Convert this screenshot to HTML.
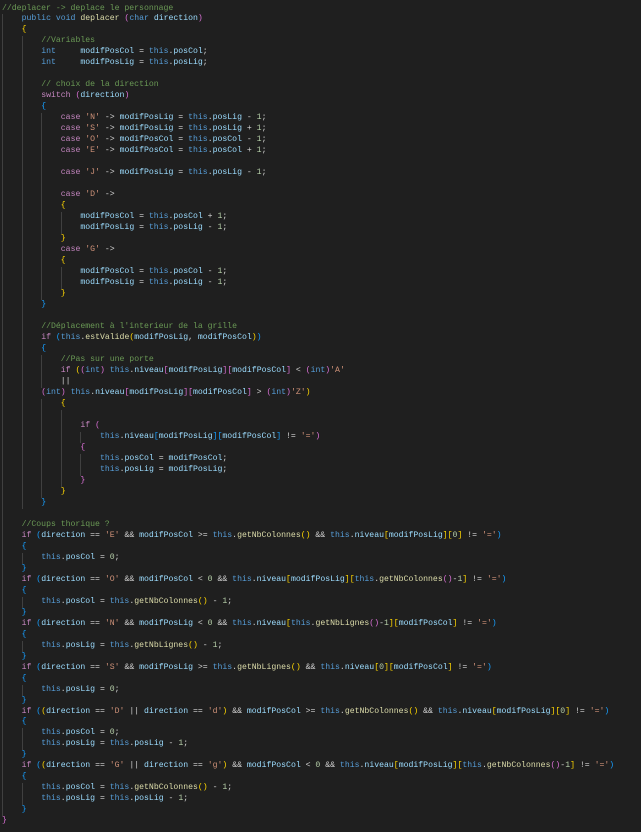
<!DOCTYPE html>
<html><head><meta charset="utf-8"><style>
html,body{margin:0;padding:0;background:#1f1f1f;width:641px;height:832px;overflow:hidden}
#c{position:absolute;left:2px;top:3.5px;font-family:"Liberation Mono",monospace;font-size:8.17px;line-height:10.99px;color:#d4d4d4}
#c div{height:10.99px;white-space:pre}
i{display:inline-block;width:19.6px;height:10.99px;vertical-align:top;box-sizing:border-box;border-left:1px solid #404040;font-style:normal}
.k{color:#569cd6}.c{color:#c586c0}.f{color:#dcdcaa}.v{color:#9cdcfe}.s{color:#ce9178}.n{color:#b5cea8}.m{color:#6a9955}
.y{color:#ffd700}.p{color:#da70d6}.b{color:#179fff}
</style></head><body><div id="c">
<div><span class="m">//deplacer -&gt; deplace le personnage</span></div>
<div><i></i><span class="k">public void</span> <span class="f">deplacer</span> <span class="p">(</span><span class="k">char</span> <span class="v">direction</span><span class="p">)</span></div>
<div><i></i><span class="y">{</span></div>
<div><i></i><i></i><span class="m">//Variables</span></div>
<div><i></i><i></i><span class="k">int</span>     <span class="v">modifPosCol</span> = <span class="k">this</span>.<span class="v">posCol</span>;</div>
<div><i></i><i></i><span class="k">int</span>     <span class="v">modifPosLig</span> = <span class="k">this</span>.<span class="v">posLig</span>;</div>
<div><i></i><i></i></div>
<div><i></i><i></i><span class="m">// choix de la direction</span></div>
<div><i></i><i></i><span class="c">switch</span> <span class="p">(</span><span class="v">direction</span><span class="p">)</span></div>
<div><i></i><i></i><span class="b">{</span></div>
<div><i></i><i></i><i></i><span class="c">case</span> <span class="s">'N'</span> -&gt; <span class="v">modifPosLig</span> = <span class="k">this</span>.<span class="v">posLig</span> - <span class="n">1</span>;</div>
<div><i></i><i></i><i></i><span class="c">case</span> <span class="s">'S'</span> -&gt; <span class="v">modifPosLig</span> = <span class="k">this</span>.<span class="v">posLig</span> + <span class="n">1</span>;</div>
<div><i></i><i></i><i></i><span class="c">case</span> <span class="s">'O'</span> -&gt; <span class="v">modifPosCol</span> = <span class="k">this</span>.<span class="v">posCol</span> - <span class="n">1</span>;</div>
<div><i></i><i></i><i></i><span class="c">case</span> <span class="s">'E'</span> -&gt; <span class="v">modifPosCol</span> = <span class="k">this</span>.<span class="v">posCol</span> + <span class="n">1</span>;</div>
<div><i></i><i></i><i></i></div>
<div><i></i><i></i><i></i><span class="c">case</span> <span class="s">'J'</span> -&gt; <span class="v">modifPosLig</span> = <span class="k">this</span>.<span class="v">posLig</span> - <span class="n">1</span>;</div>
<div><i></i><i></i><i></i></div>
<div><i></i><i></i><i></i><span class="c">case</span> <span class="s">'D'</span> -&gt;</div>
<div><i></i><i></i><i></i><span class="y">{</span></div>
<div><i></i><i></i><i></i><i></i><span class="v">modifPosCol</span> = <span class="k">this</span>.<span class="v">posCol</span> + <span class="n">1</span>;</div>
<div><i></i><i></i><i></i><i></i><span class="v">modifPosLig</span> = <span class="k">this</span>.<span class="v">posLig</span> - <span class="n">1</span>;</div>
<div><i></i><i></i><i></i><span class="y">}</span></div>
<div><i></i><i></i><i></i><span class="c">case</span> <span class="s">'G'</span> -&gt;</div>
<div><i></i><i></i><i></i><span class="y">{</span></div>
<div><i></i><i></i><i></i><i></i><span class="v">modifPosCol</span> = <span class="k">this</span>.<span class="v">posCol</span> - <span class="n">1</span>;</div>
<div><i></i><i></i><i></i><i></i><span class="v">modifPosLig</span> = <span class="k">this</span>.<span class="v">posLig</span> - <span class="n">1</span>;</div>
<div><i></i><i></i><i></i><span class="y">}</span></div>
<div><i></i><i></i><span class="b">}</span></div>
<div><i></i><i></i></div>
<div><i></i><i></i><span class="m">//Déplacement à l'interieur de la grille</span></div>
<div><i></i><i></i><span class="c">if</span> <span class="b">(</span><span class="k">this</span>.<span class="f">estValide</span><span class="y">(</span><span class="v">modifPosLig</span>, <span class="v">modifPosCol</span><span class="y">)</span><span class="b">)</span></div>
<div><i></i><i></i><span class="b">{</span></div>
<div><i></i><i></i><i></i><span class="m">//Pas sur une porte</span></div>
<div><i></i><i></i><i></i><span class="c">if</span> <span class="y">(</span><span class="p">(</span><span class="k">int</span><span class="p">)</span> <span class="k">this</span>.<span class="v">niveau</span><span class="p">[</span><span class="v">modifPosLig</span><span class="p">][</span><span class="v">modifPosCol</span><span class="p">]</span> &lt; <span class="p">(</span><span class="k">int</span><span class="p">)</span><span class="s">'A'</span></div>
<div><i></i><i></i><i></i>||</div>
<div><i></i><i></i><span class="p">(</span><span class="k">int</span><span class="p">)</span> <span class="k">this</span>.<span class="v">niveau</span><span class="p">[</span><span class="v">modifPosLig</span><span class="p">][</span><span class="v">modifPosCol</span><span class="p">]</span> &gt; <span class="p">(</span><span class="k">int</span><span class="p">)</span><span class="s">'Z'</span><span class="y">)</span></div>
<div><i></i><i></i><i></i><span class="y">{</span></div>
<div><i></i><i></i><i></i><i></i></div>
<div><i></i><i></i><i></i><i></i><span class="c">if</span> <span class="p">(</span></div>
<div><i></i><i></i><i></i><i></i><i></i><span class="k">this</span>.<span class="v">niveau</span><span class="b">[</span><span class="v">modifPosLig</span><span class="b">][</span><span class="v">modifPosCol</span><span class="b">]</span> != <span class="s">'='</span><span class="p">)</span></div>
<div><i></i><i></i><i></i><i></i><span class="p">{</span></div>
<div><i></i><i></i><i></i><i></i><i></i><span class="k">this</span>.<span class="v">posCol</span> = <span class="v">modifPosCol</span>;</div>
<div><i></i><i></i><i></i><i></i><i></i><span class="k">this</span>.<span class="v">posLig</span> = <span class="v">modifPosLig</span>;</div>
<div><i></i><i></i><i></i><i></i><span class="p">}</span></div>
<div><i></i><i></i><i></i><span class="y">}</span></div>
<div><i></i><i></i><span class="b">}</span></div>
<div><i></i></div>
<div><i></i><span class="m">//Coups thorique ?</span></div>
<div><i></i><span class="c">if</span> <span class="b">(</span><span class="v">direction</span> == <span class="s">'E'</span> &amp;&amp; <span class="v">modifPosCol</span> &gt;= <span class="k">this</span>.<span class="f">getNbColonnes</span><span class="y">()</span> &amp;&amp; <span class="k">this</span>.<span class="v">niveau</span><span class="y">[</span><span class="v">modifPosLig</span><span class="y">][</span><span class="n">0</span><span class="y">]</span> != <span class="s">'='</span><span class="b">)</span></div>
<div><i></i><span class="b">{</span></div>
<div><i></i><i></i><span class="k">this</span>.<span class="v">posCol</span> = <span class="n">0</span>;</div>
<div><i></i><span class="b">}</span></div>
<div><i></i><span class="c">if</span> <span class="b">(</span><span class="v">direction</span> == <span class="s">'O'</span> &amp;&amp; <span class="v">modifPosCol</span> &lt; <span class="n">0</span> &amp;&amp; <span class="k">this</span>.<span class="v">niveau</span><span class="y">[</span><span class="v">modifPosLig</span><span class="y">][</span><span class="k">this</span>.<span class="f">getNbColonnes</span><span class="p">()</span>-<span class="n">1</span><span class="y">]</span> != <span class="s">'='</span><span class="b">)</span></div>
<div><i></i><span class="b">{</span></div>
<div><i></i><i></i><span class="k">this</span>.<span class="v">posCol</span> = <span class="k">this</span>.<span class="f">getNbColonnes</span><span class="y">()</span> - <span class="n">1</span>;</div>
<div><i></i><span class="b">}</span></div>
<div><i></i><span class="c">if</span> <span class="b">(</span><span class="v">direction</span> == <span class="s">'N'</span> &amp;&amp; <span class="v">modifPosLig</span> &lt; <span class="n">0</span> &amp;&amp; <span class="k">this</span>.<span class="v">niveau</span><span class="y">[</span><span class="k">this</span>.<span class="f">getNbLignes</span><span class="p">()</span>-<span class="n">1</span><span class="y">][</span><span class="v">modifPosCol</span><span class="y">]</span> != <span class="s">'='</span><span class="b">)</span></div>
<div><i></i><span class="b">{</span></div>
<div><i></i><i></i><span class="k">this</span>.<span class="v">posLig</span> = <span class="k">this</span>.<span class="f">getNbLignes</span><span class="y">()</span> - <span class="n">1</span>;</div>
<div><i></i><span class="b">}</span></div>
<div><i></i><span class="c">if</span> <span class="b">(</span><span class="v">direction</span> == <span class="s">'S'</span> &amp;&amp; <span class="v">modifPosLig</span> &gt;= <span class="k">this</span>.<span class="f">getNbLignes</span><span class="y">()</span> &amp;&amp; <span class="k">this</span>.<span class="v">niveau</span><span class="y">[</span><span class="n">0</span><span class="y">][</span><span class="v">modifPosCol</span><span class="y">]</span> != <span class="s">'='</span><span class="b">)</span></div>
<div><i></i><span class="b">{</span></div>
<div><i></i><i></i><span class="k">this</span>.<span class="v">posLig</span> = <span class="n">0</span>;</div>
<div><i></i><span class="b">}</span></div>
<div><i></i><span class="c">if</span> <span class="b">(</span><span class="y">(</span><span class="v">direction</span> == <span class="s">'D'</span> || <span class="v">direction</span> == <span class="s">'d'</span><span class="y">)</span> &amp;&amp; <span class="v">modifPosCol</span> &gt;= <span class="k">this</span>.<span class="f">getNbColonnes</span><span class="y">()</span> &amp;&amp; <span class="k">this</span>.<span class="v">niveau</span><span class="y">[</span><span class="v">modifPosLig</span><span class="y">][</span><span class="n">0</span><span class="y">]</span> != <span class="s">'='</span><span class="b">)</span></div>
<div><i></i><span class="b">{</span></div>
<div><i></i><i></i><span class="k">this</span>.<span class="v">posCol</span> = <span class="n">0</span>;</div>
<div><i></i><i></i><span class="k">this</span>.<span class="v">posLig</span> = <span class="k">this</span>.<span class="v">posLig</span> - <span class="n">1</span>;</div>
<div><i></i><span class="b">}</span></div>
<div><i></i><span class="c">if</span> <span class="b">(</span><span class="y">(</span><span class="v">direction</span> == <span class="s">'G'</span> || <span class="v">direction</span> == <span class="s">'g'</span><span class="y">)</span> &amp;&amp; <span class="v">modifPosCol</span> &lt; <span class="n">0</span> &amp;&amp; <span class="k">this</span>.<span class="v">niveau</span><span class="y">[</span><span class="v">modifPosLig</span><span class="y">][</span><span class="k">this</span>.<span class="f">getNbColonnes</span><span class="p">()</span>-<span class="n">1</span><span class="y">]</span> != <span class="s">'='</span><span class="b">)</span></div>
<div><i></i><span class="b">{</span></div>
<div><i></i><i></i><span class="k">this</span>.<span class="v">posCol</span> = <span class="k">this</span>.<span class="f">getNbColonnes</span><span class="y">()</span> - <span class="n">1</span>;</div>
<div><i></i><i></i><span class="k">this</span>.<span class="v">posLig</span> = <span class="k">this</span>.<span class="v">posLig</span> - <span class="n">1</span>;</div>
<div><i></i><span class="b">}</span></div>
<div><span class="p">}</span></div>
</div></body></html>
